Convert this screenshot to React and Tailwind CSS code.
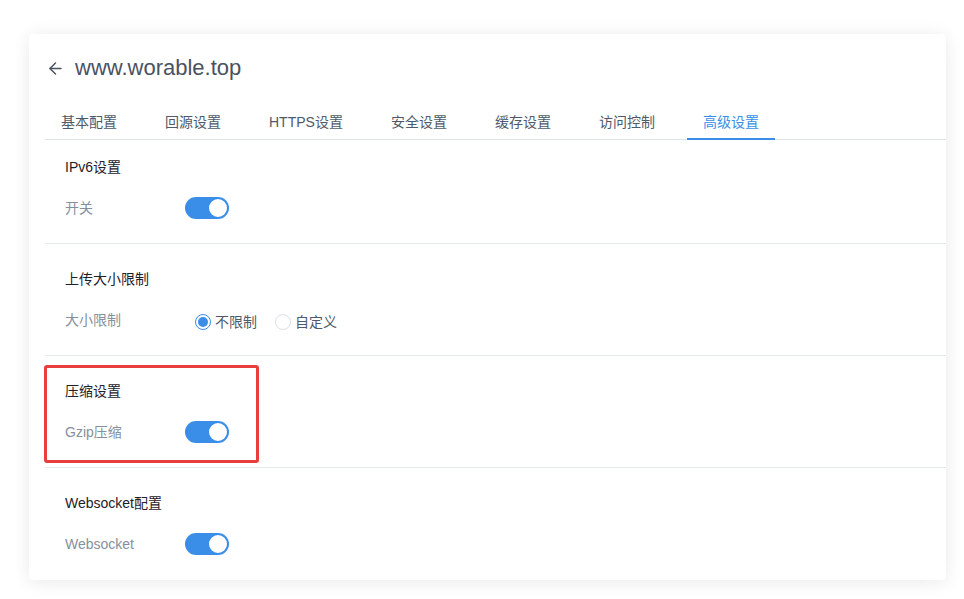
import { ArrowLeft } from "lucide-react";

const tabs = ["基本配置", "回源设置", "HTTPS设置", "安全设置", "缓存设置", "访问控制", "高级设置"];

function Toggle() {
  return (
    <div className="flex h-[22px] w-[44px] items-center justify-end rounded-full bg-[#3a8ee8] px-[2px]">
      <div className="h-[18px] w-[18px] rounded-full bg-white" />
    </div>
  );
}

function Radio({ checked, label }) {
  return (
    <label className="flex items-center gap-[4px]">
      <span
        className={
          checked
            ? "flex h-[16px] w-[16px] items-center justify-center rounded-full border border-[#3a8ee8] bg-white"
            : "h-[16px] w-[16px] rounded-full border border-[#dcdfe6] bg-white"
        }
      >
        {checked && <span className="h-[10px] w-[10px] rounded-full bg-[#3a8ee8]" />}
      </span>
      <span className="text-[14px] leading-[22px] text-[#4e5969]">{label}</span>
    </label>
  );
}

function Section({ title, label, children, first, last, highlight }) {
  return (
    <div
      className={
        "relative pl-[20px] " +
        (first ? "pt-[16px] " : "pt-[24px] ") +
        (last ? "pb-[25px]" : "pb-[24px] border-b border-[#e5e8ed]")
      }
    >
      {highlight && (
        <div className="absolute left-[-1px] top-[9px] h-[98px] w-[215px] rounded-[3px] border-[3px] border-[#e83e3e]" />
      )}
      <div className="text-[14px] leading-[22px] text-[#1d2129]">{title}</div>
      <div className="mt-[19px] flex h-[22px] items-center">
        <div className="w-[120px] text-[14px] leading-[22px] text-[#86909c]">{label}</div>
        {children}
      </div>
    </div>
  );
}

export default function App() {
  return (
    <div className="min-h-[599px] w-[964px] bg-white pl-[29px] pt-[34px] font-['Liberation_Sans','Noto_Sans_CJK_SC',sans-serif]">
      <div className="w-[917px] rounded-[4px] bg-white pl-[16px] shadow-[0_2px_18px_rgba(0,0,0,0.09)]">
        <div className="flex items-center pt-[20px]">
          <ArrowLeft size={19} strokeWidth={1.8} className="ml-[1px] text-[#4a5260]" />
          <span className="ml-[10px] text-[22px] leading-[28px] text-[#4a5260]">www.worable.top</span>
        </div>
        <div className="mt-[18px] flex gap-[16px] border-b border-[#dfe2e7]">
          {tabs.map((t) => (
            <div
              key={t}
              className={
                "-mb-px border-b-2 px-[16px] pt-[11px] pb-[5px] text-[14px] leading-[22px] " +
                (t === "高级设置" ? "border-[#3a8ee8] text-[#3a8ee8]" : "border-transparent text-[#4e5969]")
              }
            >
              {t}
            </div>
          ))}
        </div>
        <Section first title="IPv6设置" label="开关">
          <Toggle />
        </Section>
        <Section title="上传大小限制" label="大小限制">
          <div className="ml-[10px] mt-[3px] flex items-center gap-[18px]">
            <Radio checked label="不限制" />
            <Radio label="自定义" />
          </div>
        </Section>
        <Section highlight title="压缩设置" label="Gzip压缩">
          <Toggle />
        </Section>
        <Section last title="Websocket配置" label="Websocket">
          <Toggle />
        </Section>
      </div>
    </div>
  );
}
